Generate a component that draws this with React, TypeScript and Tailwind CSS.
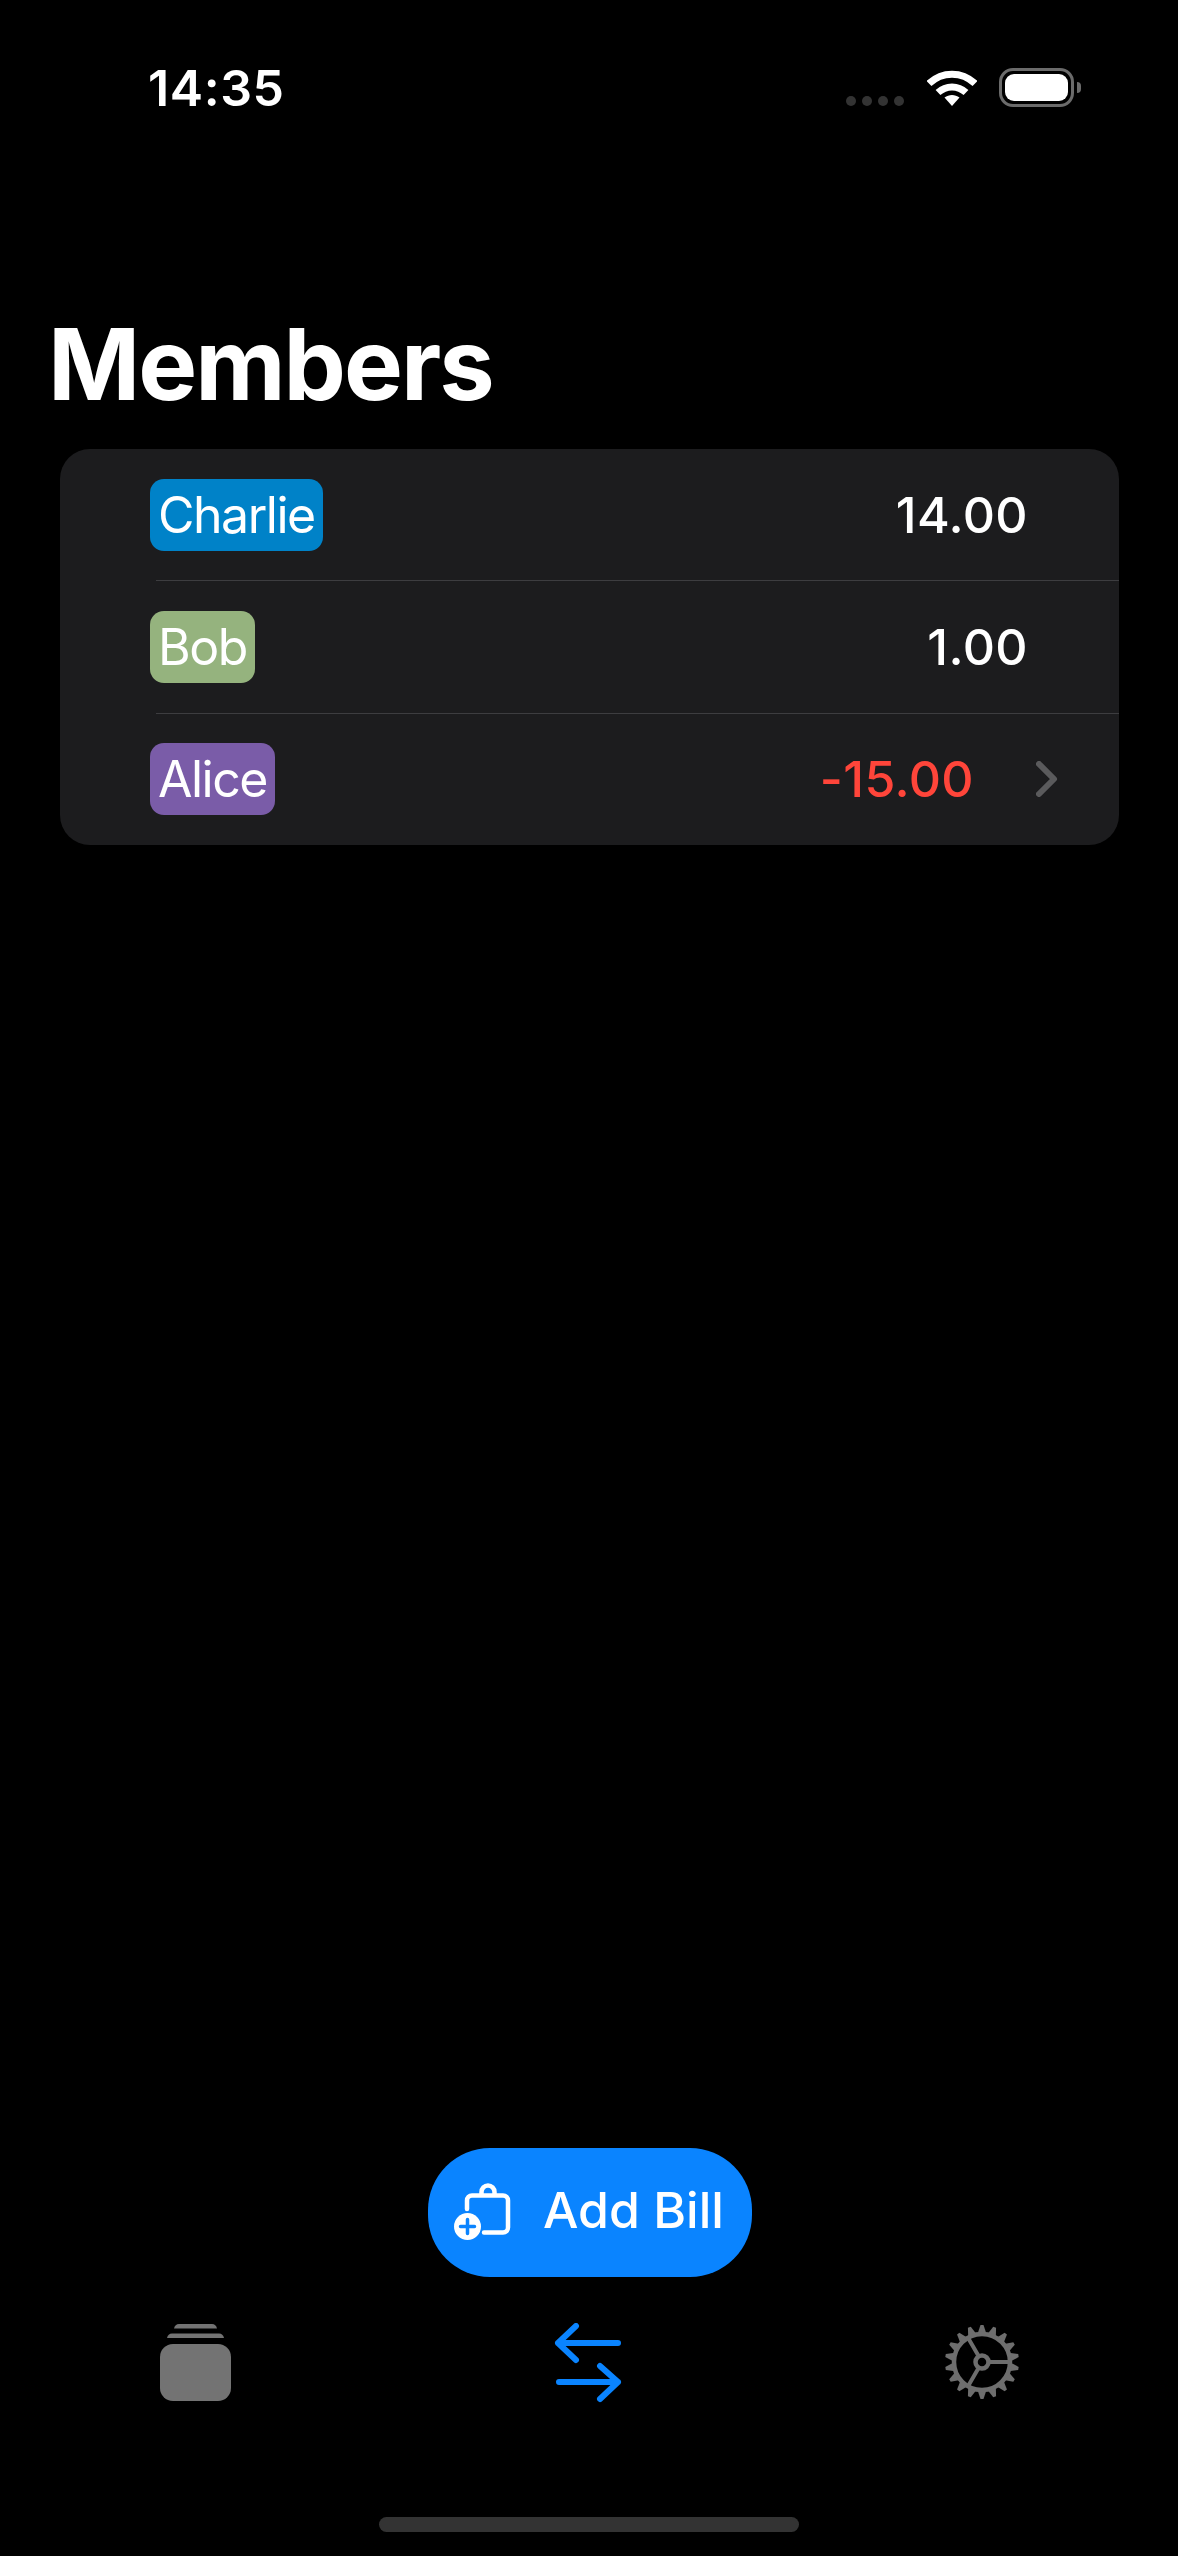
const members = [
  { name: "Charlie", amount: "14.00", chip: "bg-[#0082c8]" },
  { name: "Bob", amount: "1.00", chip: "bg-[#95b37e]" },
  { name: "Alice", amount: "-15.00", chip: "bg-[#7a5ca8]", owes: true },
];

const teeth = Array.from({ length: 18 }, (_, i) => i * 20);

const Wifi = () => (
  <svg width="50" height="37" viewBox="0 0 50 37" fill="none" className="block">
    <path d="M2 14.5C15 2 35 2 48 14.5" stroke="white" strokeWidth="7" />
    <path d="M11 23.5C19 16 31 16 39 23.5" stroke="white" strokeWidth="7" />
    <path d="M17.5 28.5C22 25 28 25 32.5 28.5L25 37Z" fill="white" />
  </svg>
);

const BagPlus = () => (
  <svg width="62" height="62" viewBox="0 0 62 62" fill="none" className="block">
    <path
      d="M13 27V18.5a5 5 0 0 1 5-5h31a5 5 0 0 1 5 5v27a5 5 0 0 1-5 5H30"
      stroke="white"
      strokeWidth="4.5"
      strokeLinecap="round"
    />
    <path d="M27.5 13V10a6.5 6.5 0 0 1 13 0v3" stroke="white" strokeWidth="4.5" />
    <circle cx="13.5" cy="44.5" r="13.5" fill="white" />
    <path d="M13.5 37.5v14M6.5 44.5h14" stroke="#0a84ff" strokeWidth="3.5" strokeLinecap="round" />
  </svg>
);

const StackIcon = () => (
  <svg width="71" height="78" viewBox="0 0 71 78" fill="#737373" className="block">
    <path d="M14 4.5Q15 0 19 0H52Q56 0 57 4.5Z" />
    <path d="M7 14Q8 9.5 12 9.5H59Q63 9.5 64 14Z" />
    <rect x="0" y="20" width="71" height="57" rx="13" />
  </svg>
);

const ArrowsIcon = () => (
  <svg width="72" height="80" viewBox="0 0 72 80" fill="none" className="block">
    <path
      d="M66 20H6M24 3L6 20L24 37M7 59H66M48 43L66 59L48 76"
      stroke="#0a84ff"
      strokeWidth="6"
      strokeLinecap="round"
      strokeLinejoin="round"
    />
  </svg>
);

const GearIcon = () => (
  <svg width="76" height="76" viewBox="-38 -37 76 76" fill="none" className="block">
    {teeth.map((deg) => (
      <path key={deg} d="M-4.5 -28L-1.5 -37H1.5L4.5 -28Z" fill="#6e6e6e" transform={`rotate(${deg})`} />
    ))}
    <circle r="28" stroke="#6e6e6e" strokeWidth="4.5" />
    <circle r="6.5" stroke="#6e6e6e" strokeWidth="4.5" />
    <path d="M8 0H28M-4 -7L-14 -24.2M-4 7L-14 24.2" stroke="#6e6e6e" strokeWidth="4" />
  </svg>
);

export default function App() {
  return (
    <div className="flex h-[2556px] w-[1178px] flex-col bg-black font-['Inter',sans-serif] text-white">
      <div className="flex h-[68px] shrink-0" />
      <div className="flex h-[39px] shrink-0 items-center justify-between pl-[148px] pr-[97px]">
        <span className="text-[50px] font-semibold leading-none tracking-[0.6px]">14:35</span>
        <div className="flex items-end">
          <div className="mb-[1px] flex gap-[6px]">
            <span className="size-[10px] rounded-full bg-[#333333]" />
            <span className="size-[10px] rounded-full bg-[#333333]" />
            <span className="size-[10px] rounded-full bg-[#333333]" />
            <span className="size-[10px] rounded-full bg-[#333333]" />
          </div>
          <div className="ml-[23px] mb-[1px]">
            <Wifi />
          </div>
          <div className="ml-[22px] flex items-center">
            <div className="flex h-[39px] w-[75px] items-center justify-center rounded-[14px] border-[3px] border-[#6b6b6b]">
              <div className="h-[27px] w-[63px] rounded-[9px] bg-white" />
            </div>
            <div className="ml-[3px] h-[11px] w-[4px] rounded-r-full bg-[#6b6b6b]" />
          </div>
        </div>
      </div>

      <h1 className="mt-[207px] pl-[48px] text-[99px] font-bold leading-[100px] tracking-[-2px]">Members</h1>

      <div className="ml-[60px] mt-[35px] w-[1059px] overflow-hidden rounded-[30px] bg-[#1c1c1e]">
        {members.map((m, i) => (
          <div key={m.name}>
            {i > 0 && <div className="ml-[96px] h-px bg-[#3d3d40]" />}
            <div className={`flex h-[131.33px] items-center justify-between pl-[90px] ${m.owes ? "pr-[61px]" : "pr-[91px]"}`}>
              <span className={`rounded-[14px] px-2 text-[50px] leading-[72px] tracking-[-1.5px] ${m.chip}`}>{m.name}</span>
              <div className="flex items-center">
                <span className={`text-[50px] font-medium leading-none tracking-[0.4px] ${m.owes ? "text-[#ff453a]" : "text-white"}`}>
                  {m.amount}
                </span>
                {m.owes && (
                  <svg width="22" height="36" viewBox="0 0 22 36" fill="none" className="ml-[62px]">
                    <path d="M3 3L18 18L3 33" stroke="#5a5a5c" strokeWidth="6" strokeLinecap="round" strokeLinejoin="round" />
                  </svg>
                )}
              </div>
            </div>
          </div>
        ))}
      </div>

      <div className="flex-1" />

      <div className="flex justify-center pl-[2px]">
        <button className="flex h-[129px] w-[324px] items-center rounded-[62px] bg-[#0a84ff] pl-[26px]">
          <BagPlus />
          <span className="mb-[5px] ml-[27px] text-[50px] font-medium leading-none">Add Bill</span>
        </button>
      </div>

      <div className="mt-[46px] flex h-[80px] items-center pl-[160px]">
        <StackIcon />
        <div className="ml-[321px]">
          <ArrowsIcon />
        </div>
        <div className="ml-[320px]">
          <GearIcon />
        </div>
      </div>

      <div className="mb-[24px] mt-[114px] flex justify-center">
        <div className="h-[15px] w-[420px] rounded-full bg-[#333333]" />
      </div>
    </div>
  );
}
